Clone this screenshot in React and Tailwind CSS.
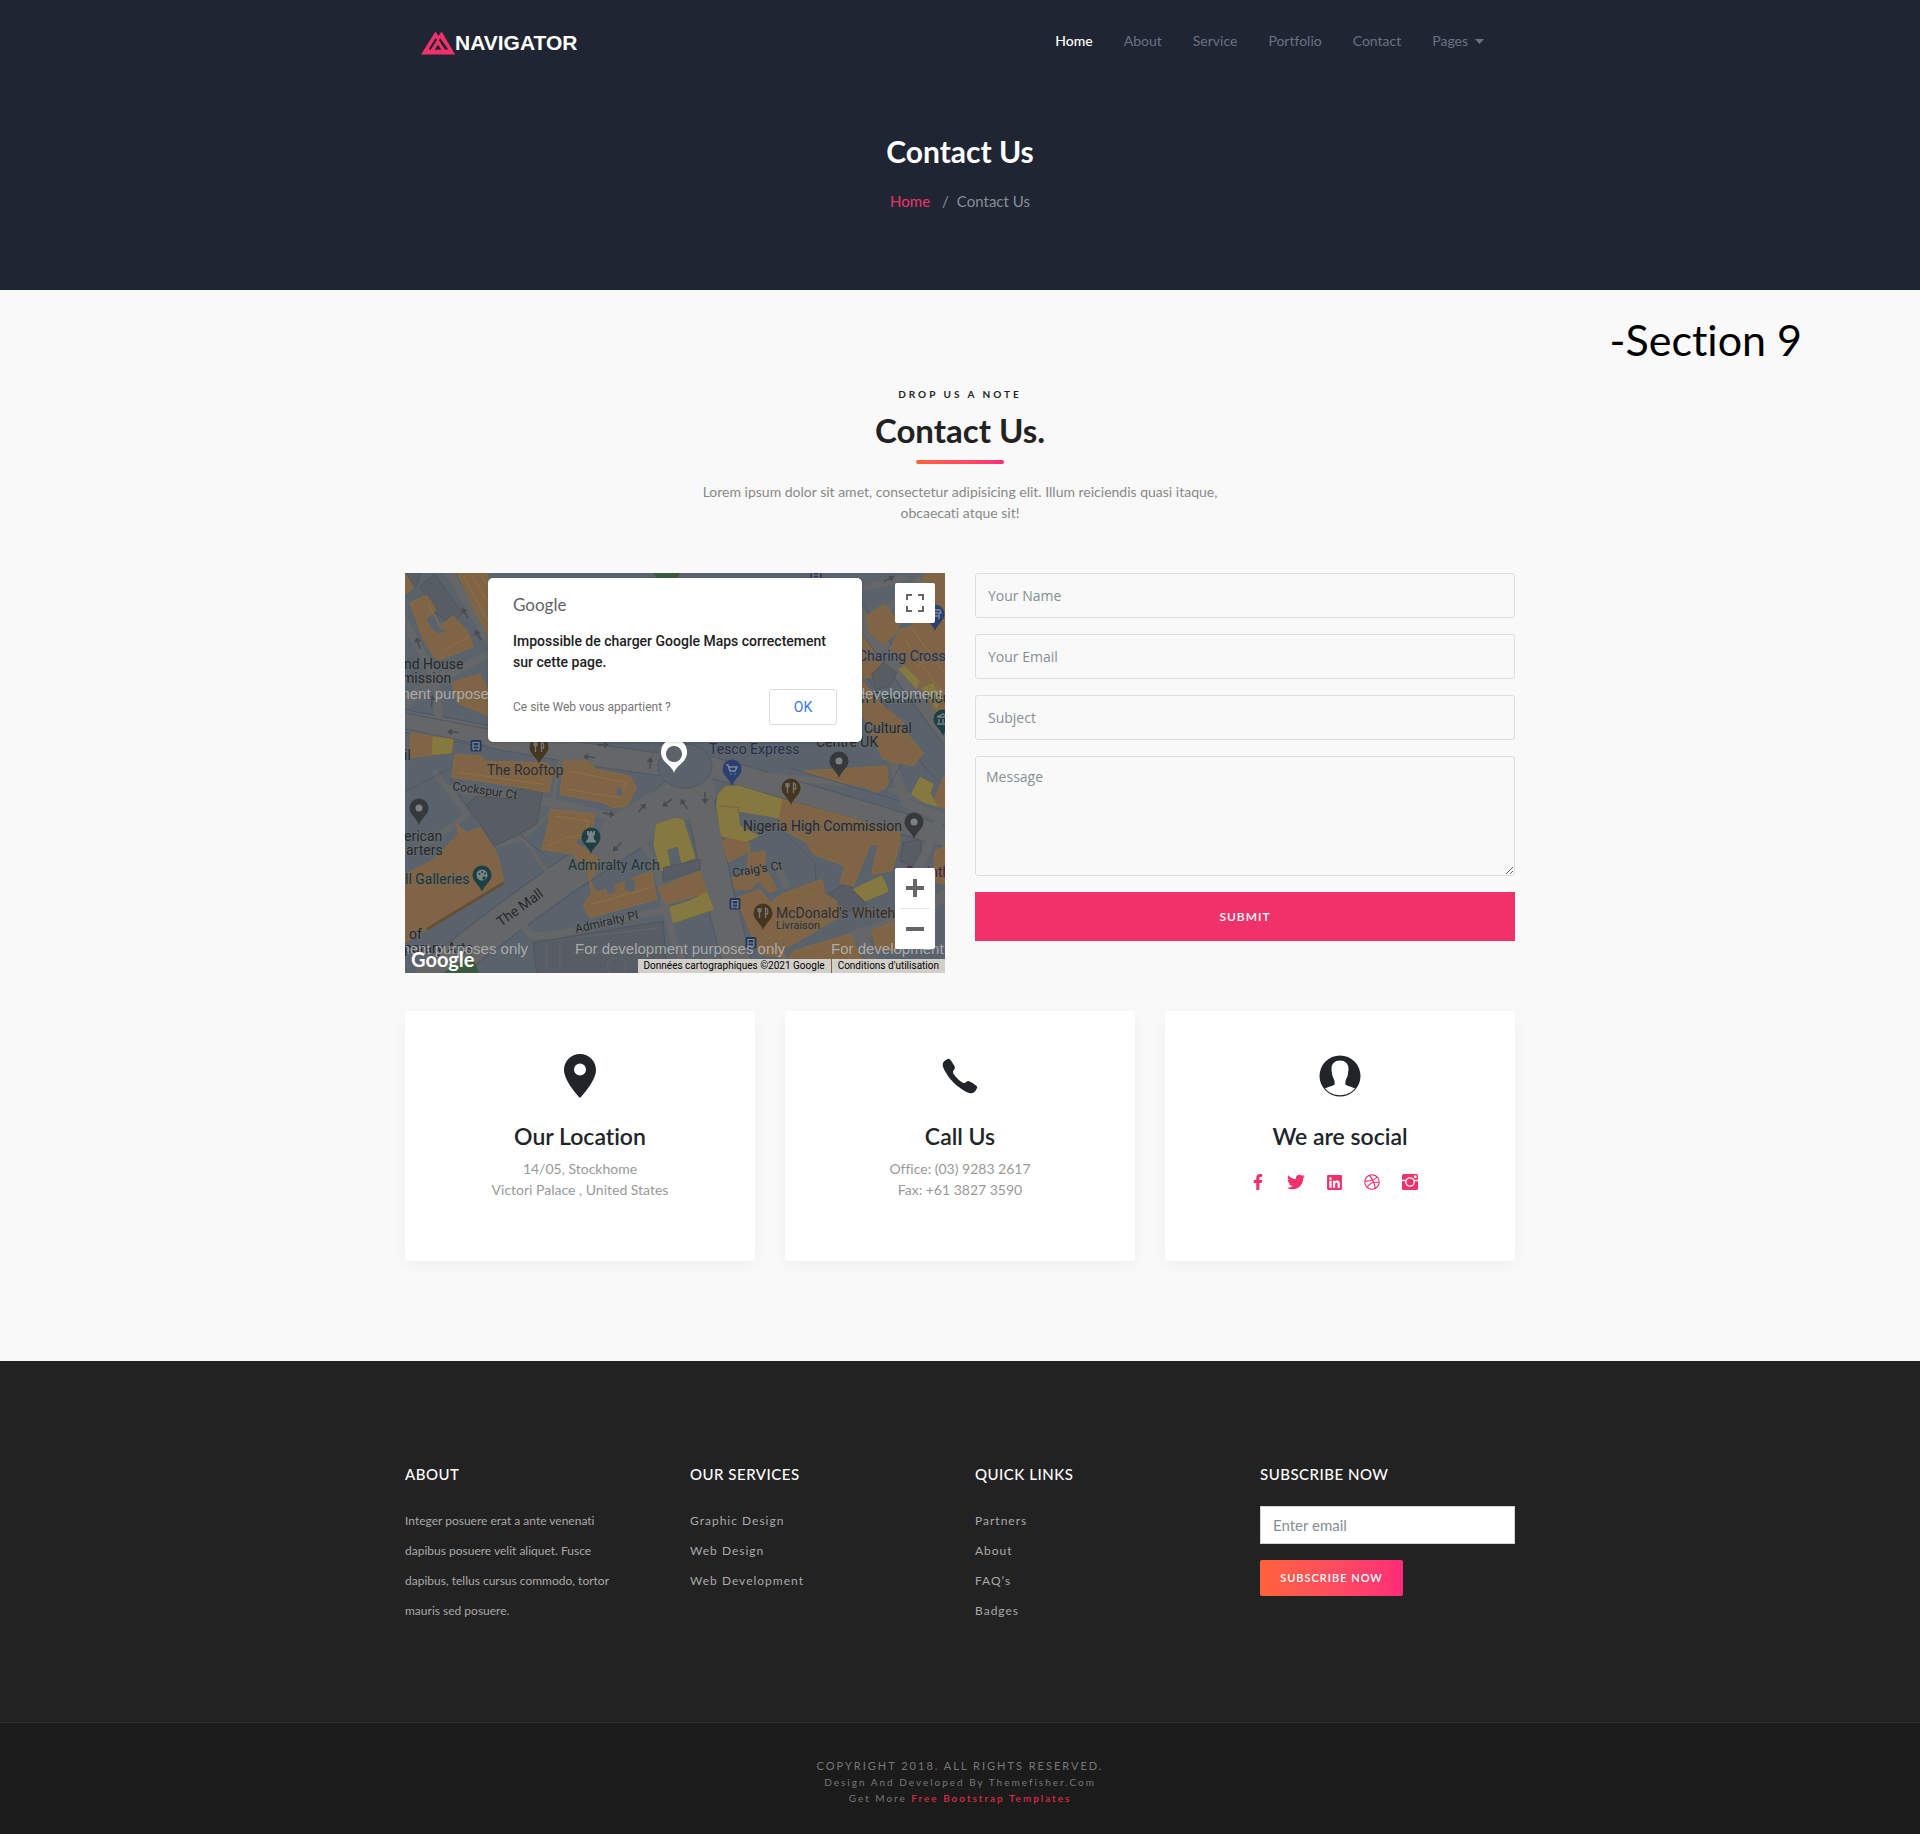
import React from "react";
import { FaFacebookF, FaTwitter, FaLinkedin, FaDribbble } from "react-icons/fa";
import { IoIosCall } from "react-icons/io";

const ORANGE = "#806446";
const YELLOW = "#857840";
const GREY = "#585d63";

function Logo() {
  return (
    <a href="#home" className="flex items-center pt-1" aria-label="Navigator">
      <svg width="34" height="24" viewBox="0 0 34 24" aria-hidden="true">
        <path
          fillRule="evenodd"
          fill="#f1326a"
          d="M0 23.5 14.5.5l3 4.6L20.6.5 34 23.5ZM7.5 18.6h2.6l6-9.600-1.600-2ZM19.300 7.300l-1.500 2 6 9.300h3.600ZM13.600 18.800h6.800l-3.500-5.200Z"
        />
        <path d="m11 19 6-9.500M22.500 19l-6-9.500" stroke="#f1326a" strokeWidth="2" />
      </svg>
      <span className="font-['Liberation_Sans_Narrow','Liberation_Sans',sans-serif] text-[21px] leading-6 font-bold text-white">
        NAVIGATOR
      </span>
    </a>
  );
}

const pins = [
  { x: 134, y: 174, c: "#45371f", k: "food" },
  { x: 14, y: 235, c: "#36393c", k: "dot" },
  { x: 77, y: 302, c: "#1d4044", k: "art" },
  { x: 186, y: 264, c: "#1d4044", k: "rook" },
  { x: 327, y: 196, c: "#2c4070", k: "cart" },
  { x: 434, y: 188, c: "#36393c", k: "dot" },
  { x: 386, y: 215, c: "#45371f", k: "food" },
  { x: 509, y: 249, c: "#36393c", k: "dot" },
  { x: 358, y: 340, c: "#45371f", k: "food" },
  { x: 530, y: 41, c: "#2c4070", k: "shop" },
  { x: 538, y: 146, c: "#1d4044", k: "museum" },
];

function PinGlyph({ k }) {
  switch (k) {
    case "food":
      return <path d="M-3.500-5v4M-5-5v3q1.500 2 3 0v-3M-3.500-1v6M2.500 5v-10q3 1 2 6h-2" fill="none" stroke="#777" strokeWidth="1.300" />;
    case "art":
      return (
        <g>
          <circle r="5.500" fill="#7a8486" />
          <circle cx="-2.500" cy="-1" r="1" fill="#1d4044" />
          <circle cx="0" cy="-3" r="1" fill="#1d4044" />
          <circle cx="3" cy="-1.500" r="1" fill="#1d4044" />
          <circle cx="2" cy="3" r="1.700" fill="#1d4044" />
        </g>
      );
    case "rook":
      return <path d="M-4-6h2v1.500h1V-6h2v1.500h1V-6h2v4l-1.500 1 .5 3 2 2v1.500H-5V4l2-2 .5-3L-4-2Z" fill="#7a8486" />;
    case "cart":
      return <path d="M-6-4h2l2 6h5l2-4h-8M-1 4.500v1M3 4.500v1" fill="none" stroke="#7d86a0" strokeWidth="1.500" />;
    case "shop":
      return <path d="M-5-4H5l1 3H-6ZM-4 0v5M4 0v5M-4 2h8" fill="none" stroke="#7d86a0" strokeWidth="1.400" />;
    case "museum":
      return <path d="M-6-2 0-5l6 3ZM-4 0v4M0 0v4M4 0v4M-6 5H6" fill="none" stroke="#7a8486" strokeWidth="1.300" />;
    default:
      return <circle r="3.500" fill="#808080" />;
  }
}

const arrows = [
  [60, 40, -120], [73, 62, -120], [13, 70, -110], [27, 128, -85], [48, 159, 185],
  [198, 172, 0], [184, 184, 185], [204, 241, 10], [237, 235, -50], [262, 230, 140],
  [212, 274, 135], [245, 190, -90], [300, 225, 90], [279, 231, -125], [484, 6, -25],
];

const buses = [[71, 173], [330, 331], [346, 370], [411, 2]];

function MapCanvas() {
  return (
    <svg
      viewBox="0 0 540 400"
      preserveAspectRatio="xMidYMid slice"
      className="absolute inset-0 h-full w-full"
      fontFamily="Roboto, sans-serif"
      aria-label="Map"
    >
      <rect width="540" height="400" fill="#5a626c" />

      {/* streets */}
      <g fill="none" stroke="#4e5867" strokeLinejoin="round">
        <path d="M-5 147 80 163 180 181 280 195" strokeWidth="23" />
        <path d="M25 405 113 338 160 304 225 262 290 205" strokeWidth="35" />
        <path d="M288 205 300 250 312 310 336 405" strokeWidth="30" />
        <path d="M290 190 345 205 440 233 545 265" strokeWidth="22" />
        <path d="M448 34 545 165" strokeWidth="19" />
      </g>
      <g fill="none" stroke="#656667" strokeLinejoin="round" strokeLinecap="round">
        <path d="M-5 147 80 163 180 181 280 195" strokeWidth="21" />
        <path d="M25 405 113 338 160 304 225 262 290 205" strokeWidth="33" />
        <path d="M215 262 290 218" strokeWidth="42" />
        <path d="M288 205 300 250 312 310 336 405" strokeWidth="28" />
        <path d="M290 190 345 205 440 233 545 265" strokeWidth="20" />
        <path d="M448 34 545 165" strokeWidth="17" />
        <path d="M-2 45 30 105 34 145M42 -5 65 35 88 75M0 125 90 78M0 132 40 100" strokeWidth="8" />
        <path d="M48 215 110 225 150 230 215 246" strokeWidth="9" />
        <path d="M157 170 146 240 118 265 92 273M118 265 143 300" strokeWidth="4" />
        <path d="M65 240 20 272 0 280M30 200 63 242" strokeWidth="6" />
        <path d="M116 350 126 362 145 363 262 336" strokeWidth="7" />
        <path d="M238 270 250 290 268 365 282 400" strokeWidth="7" />
        <path d="M340 200 480 215 545 235" strokeWidth="6" />
        <path d="M488 190 500 230 540 245M533 250 512 300" strokeWidth="9" />
        <path d="M372 392 500 346 545 320M455 360 470 395" strokeWidth="12" />
        <path d="M372 292 381 312" strokeWidth="8" />
        <path d="M457 60 500 20 520 0M460 15 500 5" strokeWidth="7" />
      </g>
      <g fill="none" stroke="#4e5867" strokeWidth="1">
        <path d="M0 140 83 156M0 156 83 173M45 206l24 40M0 218l60-30M142 284l-40-33M246 192q0-20 18-24M385 195l110 33M400 240l45 60" />
        <path d="M450 120 540 215M460 100l60 95M380 260l30 30 2 40M505 175l-25 45" />
      </g>

      {/* traffic circle */}
      <ellipse cx="280" cy="193" rx="27" ry="22" fill="#5a626c" stroke="#4e5867" />

      {/* north-west blocks */}
      <g transform="translate(-5 -7) scale(.3333)" strokeWidth="3">
        <g fill={GREY} stroke="#4f545a">
          <path d="M60 60 105 25 185 140 160 180 105 140Z" />
          <path d="M15 21H60L50 60 15 70Z" />
        </g>
        <g fill={ORANGE} stroke="#8b683b">
          <path d="M15 22 40 65 15 85Z" />
          <path d="M30 110 80 88 108 132 76 160 90 186 115 205 140 195 122 178 160 150 205 200 220 242 110 285 70 220Z" />
          <path d="M172 21H264V210L215 110Z" />
          <path d="M155 350 240 325 268 380V450L175 412Z" />
          <path d="M30 502 160 520 155 560 30 575Z" />
        </g>
        <path d="M190 30 264 165M215 25 264 110M240 25 264 60M85 115 125 190M135 250 205 215" stroke="#8f7047" fill="none" />
        <path d="M100 515 158 522 152 560 97 563Z" fill={YELLOW} stroke="#8d7d33" />
        <path d="M758 20H840L830 40H775Z" fill="#38593b" />
      </g>

      {/* north-east blocks */}
      <g transform="translate(265 -7) scale(.3333)" strokeWidth="3">
        <g fill={ORANGE} stroke="#8b683b">
          <path d="M590 150 640 115 690 170 680 200 640 235 600 200Z" />
          <path d="M770 21H830V480L760 380 700 300 660 250 690 190 730 180 735 90Z" />
          <path d="M577 210 640 295 605 335 577 335Z" />
          <path d="M577 345 640 420 700 470 690 500 600 480 577 450Z" />
          <path d="M600 500 700 490 760 560 730 600 640 580Z" />
        </g>
        <path d="M745 40 830 180M700 215 830 400M720 180 830 330M760 90 790 70M740 300 790 270" stroke="#8f7047" fill="none" />
        <path d="M605 325 640 290 680 320 660 360 620 370Z" fill={GREY} stroke="#4f545a" />
        <path d="M685 310 705 300 750 345 740 370ZM755 365 790 350 815 400 800 430Z" fill={YELLOW} />
      </g>

      {/* south-west blocks */}
      <g transform="translate(-5 198) scale(.3333)" strokeWidth="3">
        <g fill={GREY} stroke="#4f545a">
          <path d="M230 75 345 85 350 55 430 50 410 160 285 225 200 100Z" />
          <path d="M400 515 790 450 800 610H410Z" />
        </g>
        <path d="M440 520V600M480 515V600M520 545H780M530 500 780 470M640 560A28 28 0 1 0 660 560" fill="none" stroke="#63676b" />
        <g fill={ORANGE} stroke="#8b683b">
          <path d="M165 -50 245 -45 250 -30 440 -25 460 0 445 65 360 48 155 18Z" />
          <path d="M490 -30 560 -30 590 -5 690 15 710 50 680 105 640 110 610 95 480 70Z" />
          <path d="M455 115 585 130 575 180 520 215 510 248 425 235 435 200Z" />
          <path d="M520 210 600 265 570 330 590 365 755 300 770 385 570 440 550 405 575 365 565 300 505 235Z" />
          <path d="M15 310 95 270 125 240 175 190 170 160 200 185 240 170 290 245 312 335 80 475 15 515Z" />
        </g>
        <path d="M465 135 565 150 555 190 500 200 445 225M575 400 750 350M510 0 680 35 660 80 500 55M180 5 430 40" fill="none" stroke="#8f7047" />
        <path d="M312 335 80 475" stroke="#664d33" strokeWidth="8" />
        <ellipse cx="658" cy="62" rx="9" ry="12" fill="#5a626c" />
        <path d="M620 345Q640 325 645 350T620 365ZM675 330Q705 315 705 345T675 355Z" fill="#5a626c" />
        <path d="M770 160 830 142 850 148 885 260 845 275 835 225 800 235 810 285 785 300 762 225Z" fill={YELLOW} stroke="#8d7d33" />
        <path d="M130 605 215 550 237 605Z" fill="#38593b" />
      </g>

      {/* south-east blocks */}
      <g transform="translate(265 198) scale(.3333)" strokeWidth="3">
        <g fill={GREY} stroke="#4f545a">
          <path d="M465 375 530 335 590 400 510 430Z" />
          <path d="M700 215 750 205 755 240 725 285 690 270Z" />
          <path d="M-20 290 90 265 90 295 -20 330Z" />
        </g>
        <g fill={ORANGE} stroke="#8b683b">
          <path d="M335 85 500 130 690 185 690 215 665 300 605 310 625 220 600 222 550 345 510 335 525 285 430 250 410 215 320 165Z" />
          <path d="M158 208 230 190 240 240 175 272Z" />
          <path d="M235 248 285 240 285 290 320 355 300 365 265 330 240 355 195 355 188 320 232 310Z" />
          <path d="M190 385 270 355 300 395 335 370 455 325 465 370 500 390 505 440 350 530 330 490 345 560 270 550 240 480 215 420Z" />
          <path d="M400 0 650 -15 655 40 620 65 580 45 520 35Z" />
          <path d="M795 80 825 10V110L800 105Z" />
          <path d="M340 610 370 540 540 490 590 590 500 610Z" />
          <path d="M605 480 680 450V540L620 535Z" />
          <path d="M795 240 825 225V340L790 330Z" />
          <path d="M-35 350 90 300 110 365 -10 400Z" />
        </g>
        <g fill={YELLOW} stroke="#8d7d33">
          <path d="M140 105 145 70 165 48 205 45 335 85 325 140 205 120 208 165 265 195 230 210 155 195Z" />
          <path d="M550 355 635 315 655 360 585 390Z" />
          <path d="M725 70 750 20 790 40 780 65 800 105 765 95Z" />
          <path d="M0 410 60 390 110 365 130 415 10 455Z" />
        </g>
        <path d="M145 105 205 110V125M420 225 500 250M370 560 520 515M345 390 440 350" fill="none" stroke="#77633c" />
      </g>

      {arrows.map(([x, y, r], i) => (
        <path
          key={i}
          d="M-6-.7H1V-3.500L6 0 1 3.500V.7H-6Z"
          transform={`translate(${x} ${y}) rotate(${r})`}
          fill="#474a4e"
        />
      ))}

      {buses.map(([x, y], i) => (
        <g key={i} transform={`translate(${x} ${y})`}>
          <rect x="-5.500" y="-6" width="11" height="11.500" rx="1.500" fill="#20385c" />
          <path d="M-3-3.500H3V3H-3ZM-3 0H3M-2.500 3v1.500M2.500 3v1.500" fill="none" stroke="#808890" strokeWidth="1.200" />
        </g>
      ))}

      {pins.map((p, i) => (
        <g key={i} transform={`translate(${p.x} ${p.y})`}>
          <path d="M0 17C-2 10-9.500 7-9.500 0a9.500 9.500 0 0 1 19 0C9.500 7 2 10 0 17Z" fill={p.c} />
          <PinGlyph k={p.k} />
        </g>
      ))}

      <g fontSize="14" fill="#24282c" stroke="#6a6c6e" strokeWidth="2" strokeOpacity=".5" paintOrder="stroke">
        <text x="-1" y="96">nd House</text>
        <text x="-3" y="110">mission</text>
        <text x="-1" y="187">il</text>
        <text x="82" y="202" fill="#392c1a">The Rooftop</text>
        <text x="47" y="217" fontSize="12" transform="rotate(8 47 217)">Cockspur Ct</text>
        <text x="-1" y="268">erican</text>
        <text x="1" y="282">arters</text>
        <text x="0" y="311" fill="#1a3436">ll Galleries</text>
        <text x="163" y="297" fill="#1a3436">Admiralty Arch</text>
        <text x="96" y="354" transform="rotate(-36 96 354)">The Mall</text>
        <text x="171" y="360" fontSize="12" transform="rotate(-13 171 360)">Admiralty Pl</text>
        <text x="4" y="366">of</text>
        <text x="-1" y="380">porary Arts</text>
        <text x="304" y="181" fill="#232f4d">Tesco Express</text>
        <text x="338" y="258">Nigeria High Commission</text>
        <text x="328" y="304" fontSize="12" transform="rotate(-9 328 304)">Craig's Ct</text>
        <text x="371" y="345" fill="#392c1a">McDonald's Whitehall</text>
        <text x="371" y="356" fontSize="11" fill="#392c1a">Livraison</text>
        <text x="453" y="88" fill="#232f4d">Charing Cross</text>
        <text x="456" y="130" fill="#1a3436">n Franklin House</text>
        <text x="459" y="160">Cultural</text>
        <text x="411" y="174">Centre UK</text>
        <text x="500" y="304" fill="#4a1f2b">Corinthia</text>
      </g>

      <g fontSize="15" fontFamily="'Liberation Sans', sans-serif" fill="#b9b9b9" fillOpacity=".85">
        <text x="-87" y="126">For development purposes only</text>
        <text x="425" y="126">For development purposes only</text>
        <text x="-87" y="381">For development purposes only</text>
        <text x="170" y="381">For development purposes only</text>
        <text x="426" y="381">For development purposes only</text>
      </g>

      <path
        fillRule="evenodd"
        fill="#fff"
        d="M269 200C267 192 256 190 256 179a13 13 0 0 1 26 0C282 190 271 192 269 200ZM269 173a8 8 0 1 0 .01 0Z"
      />
      <circle cx="269" cy="181" r="7.500" fill="#5c6268" />
    </svg>
  );
}

function MapPanel() {
  return (
    <div className="relative h-[400px] overflow-hidden bg-[#5a626c] font-[Roboto,sans-serif]">
      <MapCanvas />
      <span className="absolute bottom-[2px] left-[6px] font-[Lato,sans-serif] text-[20px] leading-6 font-bold text-white">
        Google
      </span>

      <div
        role="dialog"
        aria-label="Google Maps"
        className="absolute top-[5px] left-1/2 h-[164px] w-[374px] -translate-x-1/2 rounded-[5px] bg-white px-[25px] pt-[15px] shadow"
      >
        <p className="font-[Lato,sans-serif] text-[17px] leading-6 text-[#5f6368]">Google</p>
        <p className="mt-[14px] text-[14px] leading-[21px] font-medium text-[#202124]">
          Impossible de charger Google Maps correctement
          <br />
          sur cette page.
        </p>
        <div className="mt-4 flex items-center justify-between">
          <a href="#owner" className="text-[12px] text-[#757575]">
            Ce site Web vous appartient ?
          </a>
          <button type="button" className="h-9 w-[68px] rounded-[3px] border border-[#dadce0] text-[14px] text-[#3a77e8]">
            OK
          </button>
        </div>
      </div>

      <button
        type="button"
        aria-label="Fullscreen"
        className="absolute top-[10px] right-[10px] flex size-10 items-center justify-center rounded-[2px] bg-white"
      >
        <svg width="18" height="18" viewBox="0 0 18 18" aria-hidden="true">
          <path d="M1 6V1H6M12 1h5V6M17 12v5H12M6 17H1V12" fill="none" stroke="#666" strokeWidth="2" />
        </svg>
      </button>

      <div className="absolute right-[10px] bottom-[24px] flex flex-col items-center rounded-[2px] bg-white">
        <button type="button" aria-label="Zoom in" className="flex size-10 items-center justify-center">
          <svg width="18" height="18" viewBox="0 0 18 18" aria-hidden="true">
            <path d="M0 9H18M9 0V18" stroke="#666" strokeWidth="4" />
          </svg>
        </button>
        <span className="h-px w-[30px] bg-[#e6e6e6]" />
        <button type="button" aria-label="Zoom out" className="flex size-10 items-center justify-center">
          <svg width="18" height="18" viewBox="0 0 18 18" aria-hidden="true">
            <path d="M0 9H18" stroke="#666" strokeWidth="4" />
          </svg>
        </button>
      </div>

      <div className="absolute right-0 bottom-0 flex h-[14px] bg-[#d2cfcb] text-[10px] leading-[14px] text-black">
        <span className="px-[6px]">Données cartographiques ©2021 Google</span>
        <a href="#terms" className="border-l border-[#806446] px-[6px]">
          Conditions d'utilisation
        </a>
      </div>
    </div>
  );
}

function Field({ id, label, type = "text" }) {
  return (
    <div>
      <label htmlFor={id} className="sr-only">
        {label}
      </label>
      <input
        id={id}
        type={type}
        placeholder={label}
        className="block h-[45px] w-full rounded-[3px] border border-[#dedede] bg-transparent px-3 font-['Open_Sans',sans-serif] text-[14px] placeholder:text-[#868e96]"
      />
    </div>
  );
}

function Card({ icon, title, children }) {
  return (
    <div className="min-h-[250px] rounded-[3px] bg-white px-6 pt-10 text-center shadow-[0_5px_15px_rgba(0,0,0,0.04)]">
      <div className="flex h-[50px] items-center justify-center text-[#212529]">{icon}</div>
      <h3 className="mt-5 text-[23px] leading-[30px] font-semibold text-[#212529]">{title}</h3>
      {children}
    </div>
  );
}

function PinIcon() {
  return (
    <svg width="32" height="44" viewBox="0 0 32 44" fill="currentColor" aria-hidden="true">
      <path fillRule="evenodd" d="M16 0C7 0 0 7 0 16c0 11.500 16 28 16 28s16-16.500 16-28C32 7 25 0 16 0Zm0 9.600a6 6 0 1 1 0 12 6 6 0 0 1 0-12Z" />
    </svg>
  );
}

function PersonIcon() {
  return (
    <svg width="42" height="42" viewBox="0 0 42 42" aria-hidden="true">
      <circle cx="21" cy="21" r="20.500" fill="currentColor" />
      <path
        fill="#fff"
        d="M21 5.500c-5 0-8.500 3-8.500 8 0 2 .3 3.500.5 5 0 3 2 5 2.500 7.500l.2 3.500c-2.500 1.800-7 2.500-9.700 4C9.500 37.500 15 40.200 21 40.200s11.500-2.700 15-6.700c-2.700-1.500-7.200-2.200-9.700-4l.2-3.500c.5-2.500 2.500-4.500 2.500-7.500.2-1.500.5-3 .5-5 0-5-3.500-8-8.500-8Z"
      />
    </svg>
  );
}

function InstagramIcon() {
  return (
    <svg width="16" height="16" viewBox="0 0 16 16" aria-hidden="true">
      <rect width="16" height="16" rx="1.500" fill="currentColor" />
      <path d="M0 6.500H4M12 6.500H16" stroke="#fff" strokeWidth="1.300" />
      <circle cx="8" cy="8" r="4.200" fill="none" stroke="#fff" strokeWidth="1.300" />
      <rect x="12" y="1.500" width="2.500" height="2.500" fill="#fff" />
    </svg>
  );
}

const navItems = ["About", "Service", "Portfolio", "Contact"];

const socials = [
  ["Facebook", <FaFacebookF size={16} />],
  ["Twitter", <FaTwitter size={18} />],
  ["LinkedIn", <FaLinkedin size={17} />],
  ["Dribbble", <FaDribbble size={16} />],
  ["Instagram", <InstagramIcon />],
];

function FooterColumn({ title, children }) {
  return (
    <div>
      <h4 className="text-[15px] leading-6 font-medium tracking-[0.5px] text-white uppercase">{title}</h4>
      {children}
    </div>
  );
}

function LinkList({ items }) {
  return (
    <ul className="mt-5 text-[12px] leading-[30px] tracking-[1px] text-[#a9a9a9]">
      {items.map((item) => (
        <li key={item}>
          <a href="#link">{item}</a>
        </li>
      ))}
    </ul>
  );
}

export default function App() {
  return (
    <div className="bg-[#f9f9f9] font-[Lato,sans-serif] text-[#212529] [font-variant-ligatures:none]">
      <header className="bg-[#202533] pb-[77px]">
        <div className="mx-auto flex h-[82px] max-w-[1110px] items-center justify-between px-4">
          <Logo />
          <nav className="flex items-center gap-[31px] pr-[15px] text-[14px] leading-6 text-[#6b7284]">
            <a href="#home" className="font-medium text-white">
              Home
            </a>
            {navItems.map((item) => (
              <a key={item} href="#link">
                {item}
              </a>
            ))}
            <button type="button" className="flex items-center gap-[7px]">
              Pages
              <svg width="9" height="5" viewBox="0 0 9 5" fill="currentColor" aria-hidden="true">
                <path d="M0 0H9L4.500 5Z" />
              </svg>
            </button>
          </nav>
        </div>
        <h1 className="mt-[49px] text-center text-[30px] leading-10 font-bold text-white">Contact Us</h1>
        <nav aria-label="Breadcrumb" className="mt-[18px] flex justify-center text-[15px] leading-6 text-[#868e96]">
          <a href="#home" className="text-[#f1326a]">
            Home
          </a>
          <span className="pr-2 pl-3">/</span>
          <span>Contact Us</span>
        </nav>
      </header>

      <main className="relative px-4 pt-24 pb-[100px]">
        <span className="absolute top-5 right-[118px] text-[43px] leading-[60px] text-black">-Section 9</span>
        <div className="mx-auto max-w-[1110px]">
          <div className="mx-auto max-w-[540px] text-center">
            <p className="text-[10px] leading-4 font-bold tracking-[3px]">DROP US A NOTE</p>
            <h2 className="mt-2 text-[33px] leading-10 font-bold text-[#222]">Contact Us.</h2>
            <div className="mx-auto mt-[10px] h-1 w-[88px] rounded-full bg-linear-to-r from-[#ff6339] to-[#ff2a78]" />
            <p className="mt-[17px] text-[14px] leading-[21px] text-[#888]">
              Lorem ipsum dolor sit amet, consectetur adipisicing elit. Illum reiciendis quasi itaque, obcaecati atque sit!
            </p>
          </div>

          <div className="mt-[50px] grid grid-cols-1 gap-[30px] md:grid-cols-2">
            <MapPanel />
            <form className="flex flex-col gap-4">
              <Field id="name" label="Your Name" />
              <Field id="email" label="Your Email" type="email" />
              <Field id="subject" label="Subject" />
              <div>
                <label htmlFor="message" className="sr-only">
                  Message
                </label>
                <textarea
                  id="message"
                  placeholder="Message"
                  className="block h-[120px] w-full resize rounded-[3px] border border-[#dedede] bg-transparent px-[10px] py-2 font-['Open_Sans',sans-serif] text-[14px] leading-6 placeholder:text-[#868e96]"
                />
              </div>
              <button type="submit" className="h-[49px] bg-[#f1326a] text-[12px] font-semibold tracking-[1px] text-white">
                SUBMIT
              </button>
            </form>
          </div>

          <div className="mt-[38px] grid grid-cols-1 gap-[30px] md:grid-cols-3">
            <Card icon={<PinIcon />} title="Our Location">
              <p className="mt-[7px] text-[14px] leading-[21px] text-[#999]">
                14/05, Stockhome
                <br />
                Victori Palace , United States
              </p>
            </Card>
            <Card icon={<IoIosCall size={46} />} title="Call Us">
              <p className="mt-[7px] text-[14px] leading-[21px] text-[#999]">
                Office: (03) 9283 2617
                <br />
                Fax: +61 3827 3590
              </p>
            </Card>
            <Card icon={<PersonIcon />} title="We are social">
              <ul className="mt-[22px] flex justify-center gap-5 pr-3 text-[#f1326a]">
                {socials.map(([name, icon]) => (
                  <li key={name}>
                    <a href="#social" aria-label={name} className="flex h-[18px] w-[18px] items-center justify-center">
                      {icon}
                    </a>
                  </li>
                ))}
              </ul>
            </Card>
          </div>
        </div>
      </main>

      <footer className="bg-[#222]">
        <div className="px-4 pt-[101px] pb-24">
          <div className="mx-auto grid max-w-[1110px] grid-cols-1 gap-[30px] md:grid-cols-4">
            <FooterColumn title="About">
              <p className="mt-5 max-w-[225px] text-[12px] leading-[30px] text-[#a9a9a9]">
                Integer posuere erat a ante venenati dapibus posuere velit aliquet. Fusce dapibus, tellus cursus commodo,
                tortor mauris sed posuere.
              </p>
            </FooterColumn>
            <FooterColumn title="Our services">
              <LinkList items={["Graphic Design", "Web Design", "Web Development"]} />
            </FooterColumn>
            <FooterColumn title="Quick links">
              <LinkList items={["Partners", "About", "FAQ’s", "Badges"]} />
            </FooterColumn>
            <FooterColumn title="Subscribe now">
              <form className="mt-5">
                <label htmlFor="subscribe" className="sr-only">
                  Enter email
                </label>
                <input
                  id="subscribe"
                  type="email"
                  placeholder="Enter email"
                  className="block h-[38px] w-full border border-[#ced4da] bg-white px-3 text-[15px] text-[#495057] placeholder:text-[#868e96]"
                />
                <button
                  type="submit"
                  className="mt-4 block h-9 w-[143px] rounded-[2px] bg-linear-to-r from-[#ff6339] to-[#ff2a78] text-[11px] font-semibold tracking-[1px] text-white"
                >
                  SUBSCRIBE NOW
                </button>
              </form>
            </FooterColumn>
          </div>
        </div>
        <div className="border-t border-[#2e2e2e] bg-[#1b1b1b] pt-[35px] pb-[29px] text-center text-[10px] leading-4 tracking-[2px] text-[#777]">
          <p className="text-[11px] leading-4">COPYRIGHT 2018. ALL RIGHTS RESERVED.</p>
          <p>Design And Developed By Themefisher.Com</p>
          <p>
            Get More{" "}
            <a href="#templates" className="font-medium text-[#e62a52]">
              Free Bootstrap Templates
            </a>
          </p>
        </div>
      </footer>
    </div>
  );
}
